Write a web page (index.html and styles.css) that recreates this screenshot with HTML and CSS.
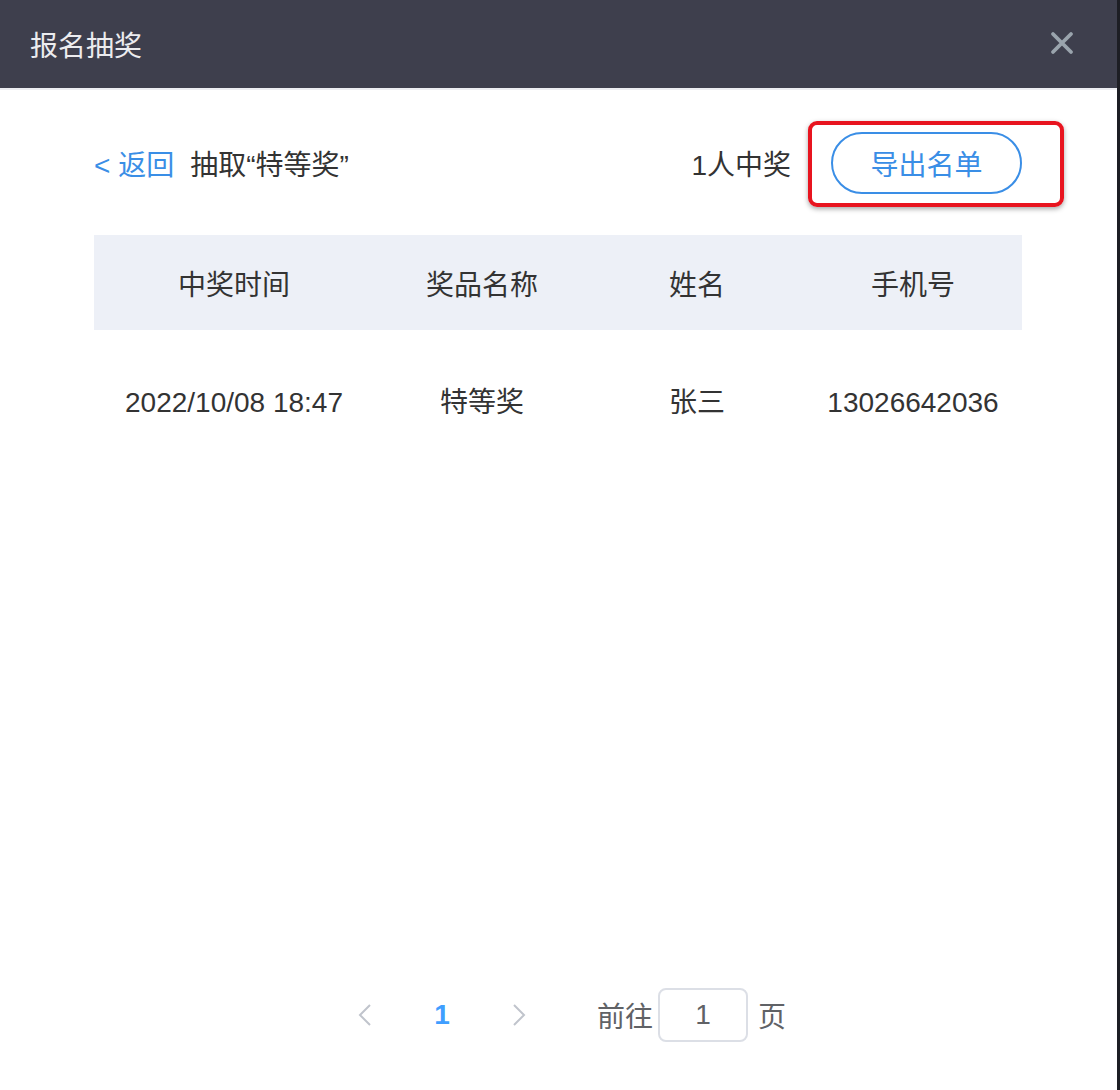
FILE: index.html
```html
<!DOCTYPE html>
<html lang="zh-CN">
<head>
    <meta charset="UTF-8">
    <meta name="viewport" content="width=device-width, initial-scale=1.0">
    <title>报名抽奖</title>
    <link rel="stylesheet" href="styles.css">
</head>
<body>

    <div class="dialog">
        <!-- 标题栏 -->
        <div class="dialog-header">
            <span class="dialog-title">报名抽奖</span>
            <svg class="dialog-close" width="24" height="24" viewBox="0 0 24 24">
                <path d="M3 3 L21 21 M21 3 L3 21" stroke="#9aa4ad" stroke-width="3.8" stroke-linecap="round"/>
            </svg>
        </div>

        <div class="dialog-body">
            <!-- 工具栏 -->
            <div class="toolbar">
                <div class="toolbar-left">
                    <a class="back-link">&lt; 返回</a>
                    <span class="draw-title">抽取“特等奖”</span>
                </div>
                <div class="toolbar-right">
                    <span class="winner-count">1人中奖</span>
                    <button class="btn-export">导出名单</button>
                </div>
                <div class="mark-box"></div>
            </div>

            <!-- 中奖名单 -->
            <table class="winner-table">
                <colgroup>
                    <col class="col-time">
                    <col class="col-prize">
                    <col class="col-name">
                    <col class="col-phone">
                </colgroup>
                <thead>
                    <tr>
                        <th>中奖时间</th>
                        <th>奖品名称</th>
                        <th>姓名</th>
                        <th>手机号</th>
                    </tr>
                </thead>
                <tbody>
                    <tr>
                        <td>2022/10/08 18:47</td>
                        <td>特等奖</td>
                        <td>张三</td>
                        <td>13026642036</td>
                    </tr>
                </tbody>
            </table>

            <!-- 分页 -->
            <div class="pagination">
                <span class="btn-page">
                    <svg width="14" height="24" viewBox="0 0 14 24"><polyline points="12,2 2,12 12,22" fill="none" stroke="#c0c4cc" stroke-width="2"/></svg>
                </span>
                <span class="btn-page pager-active">1</span>
                <span class="btn-page">
                    <svg width="14" height="24" viewBox="0 0 14 24"><polyline points="2,2 12,12 2,22" fill="none" stroke="#c0c4cc" stroke-width="2"/></svg>
                </span>
                <span class="jumper">
                    前往
                    <span class="jumper-input">1</span>
                    页
                </span>
            </div>
        </div>
    </div>

</body>
</html>
```

FILE: styles.css
```css
body {
    margin: 0;
    background-color: #1d1e24;
    font-family: "Liberation Sans", "Noto Sans CJK SC", sans-serif;
    color: #333;
}
.dialog {
    width: 1117px;
    height: 1090px;
    background-color: #fff;
    display: flex;
    flex-direction: column;
}
.dialog-header {
    height: 88px;
    padding: 0 43px 0 30px;
    background-color: #3e3f4d;
    border-bottom: 2px solid #eceef2;
    display: flex;
    align-items: center;
    justify-content: space-between;
}
.dialog-title {
    font-size: 28px;
    color: #ececef;
}
.dialog-close {
    margin-top: -2px;
}
.dialog-body {
    flex: 1;
    padding: 42px 95px 48px 94px;
    display: flex;
    flex-direction: column;
}
.toolbar {
    position: relative;
    height: 62px;
    display: flex;
    align-items: center;
    justify-content: space-between;
    font-size: 28px;
}
.toolbar-left,
.toolbar-right {
    display: flex;
    align-items: center;
}
.back-link {
    color: #3a8ee6;
    cursor: pointer;
}
.draw-title {
    margin-left: 16px;
}
.winner-count {
    margin-right: 40px;
}
.btn-export {
    width: 191px;
    height: 62px;
    border: 2px solid #3a8ee6;
    border-radius: 31px;
    background-color: #fff;
    color: #3a8ee6;
    font-family: inherit;
    font-size: 28px;
    cursor: pointer;
}
/* 红色标注框 */
.mark-box {
    position: absolute;
    left: 714px;
    top: -11px;
    width: 256px;
    height: 86px;
    box-sizing: border-box;
    border: 4px solid #e8141f;
    border-radius: 9px;
    box-shadow: 0 2px 5px rgba(0, 0, 0, 0.35);
}
.winner-table {
    margin-top: 41px;
    width: 928px;
    border-collapse: collapse;
    table-layout: fixed;
    font-size: 28px;
}
.col-time { width: 280px; }
.col-prize { width: 216px; }
.col-name { width: 214px; }
.col-phone { width: 218px; }
.winner-table th {
    height: 95px;
    padding: 0;
    background-color: #edf0f7;
    font-weight: normal;
    color: #333;
}
.winner-table td {
    padding: 50px 0 20px;
    line-height: 46px;
    text-align: center;
    color: #333;
}
.pagination {
    margin-top: auto;
    display: flex;
    align-items: center;
    justify-content: center;
    gap: 7px;
    font-size: 28px;
}
.btn-page {
    width: 70px;
    height: 54px;
    display: flex;
    align-items: center;
    justify-content: center;
}
.pager-active {
    color: #409eff;
    font-weight: bold;
}
.jumper {
    margin-left: 36px;
    display: flex;
    align-items: center;
    color: #606266;
}
.jumper-input {
    width: 90px;
    height: 54px;
    margin: 0 10px 0 5px;
    box-sizing: border-box;
    border: 2px solid #dcdfe6;
    border-radius: 8px;
    display: flex;
    align-items: center;
    justify-content: center;
    color: #606266;
}
```
